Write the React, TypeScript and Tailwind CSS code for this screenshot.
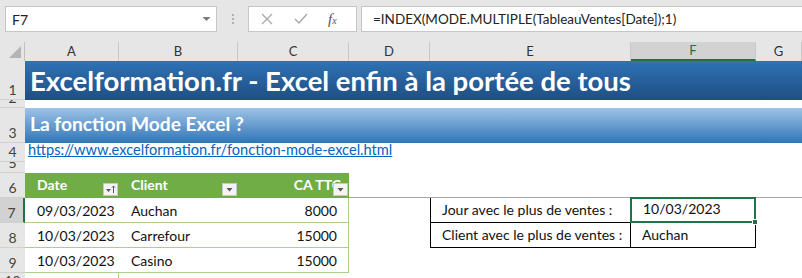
import React from 'react';

const cols = ['A', 'B', 'C', 'D', 'E', 'F', 'G'];

const rows = [
  { id: 1, date: '09/03/2023', client: 'Auchan', ca: '8000' },
  { id: 2, date: '10/03/2023', client: 'Carrefour', ca: '15000' },
  { id: 3, date: '10/03/2023', client: 'Casino', ca: '15000' },
];

const FilterButton: React.FC<{ sorted?: boolean }> = ({ sorted }) => (
  <div className="w-[15px] h-[13px] bg-[#f4f4f4] border border-[#c8c8c8] flex items-center justify-center">
    <svg width="13" height="11" viewBox="0 0 13 11">
      {sorted ? (
        <>
          <path d="M2 5 L7 5 L4.5 8 Z" fill="#555" />
          <path d="M9.5 2 L9.5 9 M8 3.5 L9.5 2 L11 3.5" stroke="#555" strokeWidth="1" fill="none" />
        </>
      ) : (
        <path d="M3.5 4 L9.5 4 L6.5 7.5 Z" fill="#555" />
      )}
    </svg>
  </div>
);

const RowHead: React.FC<{ n: number; active?: boolean }> = ({ n, active }) => (
  <div
    className={`flex items-end justify-center overflow-hidden border-b border-[#d0d0d0] text-[14px] leading-[16px] text-[#444] pb-[1px] ${
      active ? 'bg-[#d2d2d2] border-r-2 border-r-[#217346]' : 'bg-[#e6e6e6]'
    }`}
  >
    {n}
  </div>
);

export default function App() {
  return (
    <div className="w-[802px] h-[278px] overflow-hidden bg-white font-['Lato',sans-serif]">
      {/* formula bar */}
      <div className="h-[42px] bg-[#e6e6e6] flex items-start pt-[6px] pl-[5px]">
        <div className="w-[212px] h-[26px] bg-white border border-[#c6c6c6] flex items-center justify-between pl-[6px] pr-[5px] text-[14px] text-[#222]">
          <span>F7</span>
          <svg width="9" height="6" viewBox="0 0 9 6">
            <path d="M0.5 1 L8.5 1 L4.5 5 Z" fill="#7a7a7a" />
          </svg>
        </div>
        <div className="w-[31px] h-[26px] flex flex-col items-center justify-center gap-[2px]">
          <span className="w-[2px] h-[2px] bg-[#b0b0b0]" />
          <span className="w-[2px] h-[2px] bg-[#b0b0b0]" />
          <span className="w-[2px] h-[2px] bg-[#b0b0b0]" />
        </div>
        <div className="w-[109px] h-[26px] bg-white border border-[#c6c6c6] flex items-center pl-[11px] gap-[19px]">
          <svg width="14" height="14" viewBox="0 0 14 14">
            <path d="M2 2 L12 12 M12 2 L2 12" stroke="#a8a8a8" strokeWidth="1.3" />
          </svg>
          <svg width="16" height="14" viewBox="0 0 16 14">
            <path d="M2 7 L6 11 L14 2" stroke="#a8a8a8" strokeWidth="1.4" fill="none" />
          </svg>
          <span className="font-['Liberation_Serif',serif] italic text-[15px] text-[#555] leading-none">
            f<span className="text-[10px]">x</span>
          </span>
        </div>
        <div className="ml-[4px] flex-1 h-[26px] bg-white border border-[#c6c6c6] border-r-0 flex items-center pl-[11px] text-[13.5px] text-[#222]">
          =INDEX(MODE.MULTIPLE(TableauVentes[Date]);1)
        </div>
      </div>

      {/* grid */}
      <div className="grid grid-cols-[25px_94px_119px_111px_81px_201px_125px_1fr] grid-rows-[19px_39px_8px_35px_19px_11px_25px_25px_25px_25px_1fr]">
        {/* column headers */}
        <div className="bg-[#e6e6e6] border-r border-[#c0c0c0] flex items-end justify-end pr-[3px] pb-[3px]">
          <svg width="12" height="12" viewBox="0 0 12 12">
            <path d="M12 0 L12 12 L0 12 Z" fill="#b4b4b4" />
          </svg>
        </div>
        {cols.map((c) => (
          <div
            key={c}
            className={`flex items-center justify-center text-[13px] border-r border-[#c8c8c8] ${
              c === 'F'
                ? 'bg-[#d2d2d2] text-[#217346] border-b-2 border-b-[#217346]'
                : 'bg-[#e6e6e6] text-[#333]'
            }`}
          >
            {c}
          </div>
        ))}

        {/* row 1 */}
        <RowHead n={1} />
        <div className="col-span-7 bg-gradient-to-b from-[#2f72b5] to-[#1f4f82] flex items-center pl-[5px] pt-[1px] text-white font-bold text-[27.5px] whitespace-nowrap">
          Excelformation.fr - Excel enfin à la portée de tous
        </div>

        {/* row 2 */}
        <RowHead n={2} />
        <div className="col-span-7 bg-white" />

        {/* row 3 */}
        <RowHead n={3} />
        <div className="col-span-7 bg-gradient-to-b from-[#9dc3e6] to-[#2e75b6] flex items-end pb-[4px] pl-[5px] text-white font-bold text-[19.2px] whitespace-nowrap">
          La fonction Mode Excel ?
        </div>

        {/* row 4 */}
        <RowHead n={4} />
        <div className="col-span-7 flex items-end pl-[3px] pb-[1px] text-[14.6px] text-[#0563c1] underline whitespace-nowrap">
          https://www.excelformation.fr/fonction-mode-excel.html
        </div>

        {/* row 5 */}
        <RowHead n={5} />
        <div className="col-span-7" />

        {/* row 6: table header */}
        <RowHead n={6} />
        <div className="bg-[#70ad47] flex items-end justify-between pl-[12px] pr-[1px] pb-[2px] text-white font-bold text-[14px]">
          <span className="pb-[1px]">Date</span>
          <FilterButton sorted />
        </div>
        <div className="bg-[#70ad47] flex items-end justify-between pl-[12px] pr-[1px] pb-[2px] text-white font-bold text-[14px]">
          <span className="pb-[1px]">Client</span>
          <FilterButton />
        </div>
        <div className="bg-[#70ad47] flex items-end justify-end pr-[1px] pb-[2px] text-white font-bold text-[14px] whitespace-nowrap overflow-hidden">
          <span className="pb-[1px] mr-[-8px]">CA TTC</span>
          <div className="relative z-10">
            <FilterButton />
          </div>
        </div>
        <div className="col-span-4 border-b border-[#a6a6a6]" />

        {/* rows 7-9 */}
        {rows.map((r, i) => (
          <React.Fragment key={r.id}>
            <RowHead n={7 + i} active={i === 0} />
            <div className="flex items-end pl-[12px] pb-[1px] text-[14px] text-[#111] border-b border-[#a9d08e]">
              {r.date}
            </div>
            <div className="flex items-end pl-[12px] pb-[1px] text-[14px] text-[#111] border-b border-[#a9d08e]">
              {r.client}
            </div>
            <div className="flex items-end justify-end pr-[11px] pb-[1px] text-[14px] text-[#111] border-b border-r border-[#a9d08e]">
              {r.ca}
            </div>
            <div />
            {i === 0 && (
              <>
                <div className="flex items-end pl-[11px] pb-[2px] text-[14px] text-[#111] border-l border-b border-black">
                  Jour avec le plus de ventes :
                </div>
                <div className="relative flex items-end pl-[11px] pb-[2px] text-[14px] text-[#111] border-2 border-[#217346] ml-[-1px] mt-[-1px]">
                  10/03/2023
                  <span className="absolute right-[-4px] bottom-[-4px] w-[6px] h-[6px] bg-[#217346] border border-white" />
                </div>
              </>
            )}
            {i === 1 && (
              <>
                <div className="flex items-end pl-[11px] pb-[2px] text-[14px] text-[#111] border-l border-b border-r border-black">
                  Client avec le plus de ventes :
                </div>
                <div className="flex items-end pl-[11px] pb-[2px] text-[14px] text-[#111] border-b border-r border-black">
                  Auchan
                </div>
              </>
            )}
            {i === 2 && (
              <>
                <div />
                <div />
              </>
            )}
            <div />
          </React.Fragment>
        ))}

        {/* row 10 */}
        <RowHead n={10} />
        <div className="border-r border-[#a9d08e]" />
        <div />
        <div />
        <div />
        <div />
        <div />
        <div />
      </div>
    </div>
  );
}
